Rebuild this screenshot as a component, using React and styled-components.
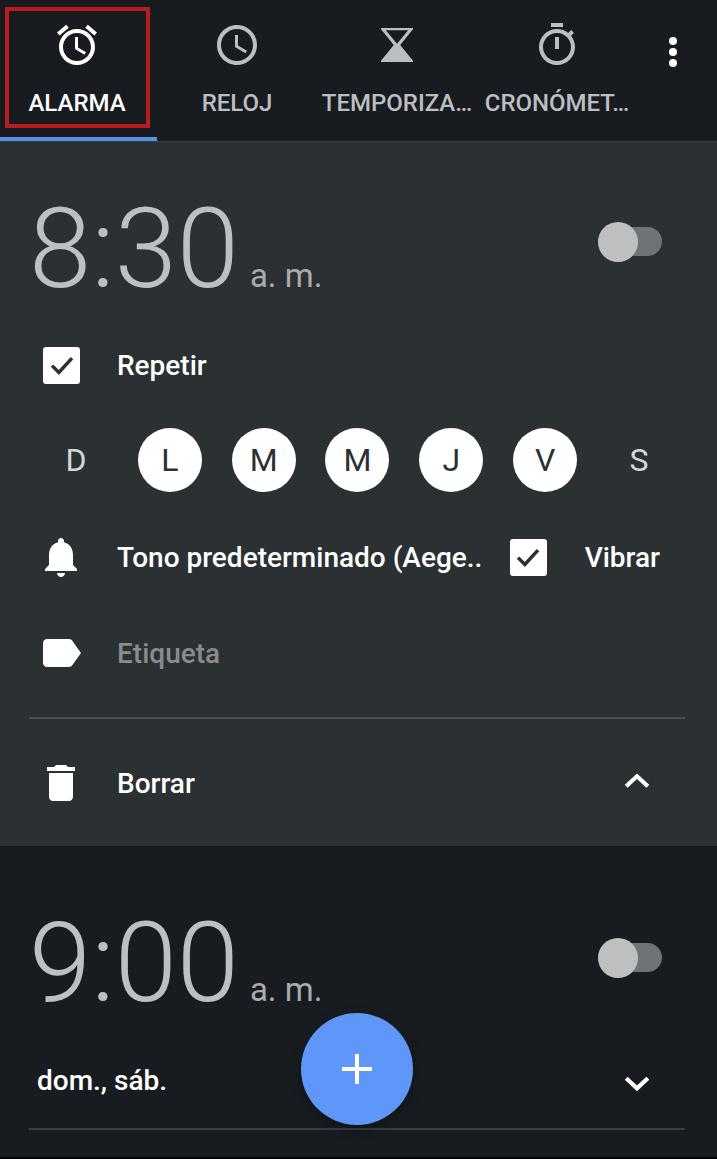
import styled, { createGlobalStyle } from "styled-components";

const GlobalStyle = createGlobalStyle`
	html, body {
		margin: 0;
		padding: 0;
		background: #000;
	}
	* {
		box-sizing: border-box;
	}
`;

const Screen = styled.div`
	position: relative;
	width: 717px;
	height: 1159px;
	overflow: hidden;
	font-family: Roboto, "Liberation Sans", sans-serif;
	background: #000;
`;

const TabBar = styled.nav`
	height: 141px;
	display: flex;
	margin-left: -3px;
	background: #181c20;
`;

const Tab = styled.div`
	position: relative;
	flex: 0 0 160px;
	display: flex;
	flex-direction: column;
	align-items: center;
	padding-top: 21px;
	color: ${(p) => (p.$active ? "#fff" : "#bcbfc1")};
	&::after {
		content: "";
		display: ${(p) => (p.$active ? "block" : "none")};
		position: absolute;
		left: 0;
		right: 0;
		bottom: 0;
		height: 4px;
		background: #5a8fe6;
	}
`;

const TabIcon = styled.svg`
	width: 48px;
	height: 48px;
	fill: currentColor;
	fill-rule: evenodd;
`;

const TabLabel = styled.span`
	margin-top: 20px;
	font-size: 24px;
	line-height: 28px;
	font-weight: 500;
	white-space: nowrap;
`;

const Overflow = styled.div`
	flex: 1;
	display: flex;
	flex-direction: column;
	align-items: center;
	gap: 3px;
	padding: 37px 8px 0 0;
	> i {
		width: 8px;
		height: 8px;
		border-radius: 50%;
		background: #fff;
	}
`;

const Highlight = styled.div`
	position: absolute;
	left: 5px;
	top: 7px;
	width: 145px;
	height: 121px;
	border: 4px solid #b71c1f;
`;

const OpenAlarm = styled.section`
	height: 705px;
	background: #2b3033;
	border-top: 1px solid #3a3f42;
	padding: 0 32px 0 29px;
`;

const ClosedAlarm = styled.section`
	height: 311px;
	background: #181c20;
	padding: 0 32px 0 29px;
`;

const TimeRow = styled.div`
	height: ${(p) => p.$height}px;
	display: flex;
	align-items: flex-start;
	justify-content: space-between;
	padding-top: ${(p) => p.$top}px;
`;

const Time = styled.div`
	display: flex;
	align-items: baseline;
	color: #bdc0c2;
`;

const Digits = styled.span`
	font-size: 112px;
	line-height: 132px;
	font-weight: 300;
`;

const Meridiem = styled.span`
	margin-left: 11px;
	font-size: 33px;
	font-weight: 400;
	color: #a9acae;
`;

const Toggle = styled.div`
	position: relative;
	width: 64px;
	height: 29px;
	margin: ${(p) => p.$top}px 23px 0 0;
	border-radius: 15px;
	background: #6e7375;
	&::before {
		content: "";
		position: absolute;
		left: 0;
		top: -5px;
		width: 40px;
		height: 40px;
		border-radius: 50%;
		background: #bfbfbf;
	}
`;

const Row = styled.div`
	height: ${(p) => p.$height || 96}px;
	display: flex;
	align-items: center;
	padding-bottom: 2px;
	color: #fff;
	font-size: 28px;
	font-weight: 500;
`;

const IconSlot = styled.div`
	flex: 0 0 88px;
	display: flex;
	align-items: center;
	padding-left: ${(p) => p.$inset || 8}px;
`;

const Glyph = styled.svg`
	width: 48px;
	height: 48px;
	fill: #fff;
`;

const CheckBox = styled.div`
	width: 37px;
	height: 37px;
	border-radius: 3px;
	background: #fff;
	display: flex;
	align-items: center;
	justify-content: center;
	flex: none;
`;

const CheckMark = styled.svg`
	width: 30px;
	height: 30px;
	fill: none;
	stroke: #2b3033;
	stroke-width: 2.8;
`;

const Days = styled.div`
	display: flex;
	justify-content: space-between;
	height: 96px;
	align-items: center;
	margin: -2px 14px 2px 0;
	padding-left: 15px;
`;

const Day = styled.div`
	width: 64px;
	height: 64px;
	border-radius: 50%;
	display: flex;
	align-items: center;
	justify-content: center;
	font-size: 32px;
	background: ${(p) => (p.$on ? "#fff" : "transparent")};
	color: ${(p) => (p.$on ? "#2b3033" : "#d4d6d7")};
`;

const Ringtone = styled.span`
	flex: 1;
	white-space: nowrap;
`;

const Muted = styled.span`
	color: #888c8e;
`;

const Vibrate = styled.div`
	display: flex;
	align-items: center;
	gap: 38px;
	margin-right: 25px;
`;

const Divider = styled.hr`
	margin: ${(p) => p.$gap || 0}px 0 0;
	border: none;
	height: 2px;
	background: ${(p) => p.$color};
`;

const Spread = styled.div`
	flex: 1;
`;

const Chevron = styled.svg`
	width: 40px;
	height: 40px;
	margin-right: 28px;
	fill: none;
	stroke: #fff;
	stroke-width: 2.5;
`;

const Repeats = styled.span`
	padding-left: 8px;
`;

const Fab = styled.button`
	position: absolute;
	left: 301px;
	top: 1013px;
	width: 112px;
	height: 112px;
	border: none;
	border-radius: 50%;
	background: #5f97f8;
	box-shadow: 0 4px 12px rgba(0, 0, 0, 0.35);
	display: flex;
	align-items: center;
	justify-content: center;
`;

const Plus = styled.svg`
	width: 30px;
	height: 30px;
	fill: #fff;
`;

const tabs = [
	{
		label: "ALARMA",
		active: true,
		icon: "M22 5.72l-4.6-3.86-1.29 1.53 4.6 3.86L22 5.72zM7.88 3.39L6.6 1.86 2 5.71l1.29 1.53 4.59-3.85zM12.5 8H11v6l4.75 2.85.75-1.23-4-2.37V8zM12 4c-4.97 0-9 4.03-9 9s4.03 9 9 9 9-4.03 9-9-4.03-9-9-9zm0 16c-3.87 0-7-3.13-7-7s3.13-7 7-7 7 3.13 7 7-3.13 7-7 7z",
	},
	{
		label: "RELOJ",
		icon: "M11.99 2C6.47 2 2 6.48 2 12s4.47 10 9.99 10C17.52 22 22 17.52 22 12S17.52 2 11.99 2zM12 20c-4.42 0-8-3.58-8-8s3.58-8 8-8 8 3.58 8 8-3.58 8-8 8zm.5-13H11v6l5.25 3.15.75-1.23-4.5-2.67V7z",
	},
	{
		// hourglass: hollow top bulb, filled bottom bulb
		label: "TEMPORIZA…",
		icon: "M4 3.5h16v.6L13.6 12 20 19.9v.6H4v-.6L10.4 12 4 4.1v-.6zM6.4 4.6L12 11.4l5.6-6.8H6.4z",
	},
	{
		label: "CRONÓMET…",
		icon: "M15 1H9v2h6V1zm-4 13h2V8h-2v6zm8.03-6.61l1.42-1.42c-.43-.51-.9-.99-1.41-1.41l-1.42 1.42C16.07 4.74 14.12 4 12 4c-4.97 0-9 4.03-9 9s4.02 9 9 9 9-4.03 9-9c0-2.12-.74-4.07-1.97-5.61zM12 20c-3.87 0-7-3.13-7-7s3.13-7 7-7 7 3.13 7 7-3.13 7-7 7z",
	},
];

const days = [
	{ label: "D" },
	{ label: "L", on: true },
	{ label: "M", on: true },
	{ label: "M", on: true },
	{ label: "J", on: true },
	{ label: "V", on: true },
	{ label: "S" },
];

function Check() {
	return (
		<CheckBox>
			<CheckMark viewBox="0 0 24 24">
				<path d="M4 12.5l5.5 5.5L20 6.5" />
			</CheckMark>
		</CheckBox>
	);
}

export default function App() {
	return (
		<Screen>
			<GlobalStyle />
			<TabBar>
				{tabs.map((t) => (
					<Tab key={t.label} $active={t.active}>
						<TabIcon viewBox="0 0 24 24">
							<path d={t.icon} />
						</TabIcon>
						<TabLabel>{t.label}</TabLabel>
					</Tab>
				))}
				<Overflow>
					<i />
					<i />
					<i />
				</Overflow>
			</TabBar>
			<Highlight />

			<OpenAlarm>
				<TimeRow $height={176} $top={41}>
					<Time>
						<Digits>8:30</Digits>
						<Meridiem>a. m.</Meridiem>
					</Time>
					<Toggle $top={44} />
				</TimeRow>
				<Row>
					<IconSlot $inset={14}>
						<Check />
					</IconSlot>
					Repetir
				</Row>
				<Days>
					{days.map((d, i) => (
						<Day key={i} $on={d.on}>
							{d.label}
						</Day>
					))}
				</Days>
				<Row>
					<IconSlot>
						<Glyph viewBox="0 0 24 24">
							<path d="M12 22c1.1 0 2-.9 2-2h-4c0 1.1.9 2 2 2zm6-6v-5c0-3.07-1.63-5.64-4.5-6.32V4c0-.83-.67-1.5-1.5-1.5s-1.5.67-1.5 1.5v.68C7.64 5.36 6 7.92 6 11v5l-2 2v1h16v-1l-2-2z" />
						</Glyph>
					</IconSlot>
					<Ringtone>Tono predeterminado (Aege..</Ringtone>
					<Vibrate>
						<Check />
						Vibrar
					</Vibrate>
				</Row>
				<Row>
					<IconSlot>
						<Glyph viewBox="0 0 24 24">
							<path d="M17.63 5.84C17.27 5.33 16.67 5 16 5L5 5.01C3.9 5.01 3 5.9 3 7v10c0 1.1.9 1.99 2 1.99L16 19c.67 0 1.27-.33 1.63-.84L22 12l-4.37-6.16z" />
						</Glyph>
					</IconSlot>
					<Muted>Etiqueta</Muted>
				</Row>
				<Divider $gap={15} $color="#4a4e51" />
				<Row $height={130}>
					<IconSlot>
						<Glyph viewBox="0 0 24 24">
							<path d="M6 19c0 1.1.9 2 2 2h8c1.1 0 2-.9 2-2V7H6v12zM19 4h-3.5l-1-1h-5l-1 1H5v2h14V4z" />
						</Glyph>
					</IconSlot>
					<Spread>Borrar</Spread>
					<Chevron viewBox="0 0 24 24">
						<path d="M5.5 14l6.5-6 6.5 6" />
					</Chevron>
				</Row>
			</OpenAlarm>

			<ClosedAlarm>
				<TimeRow $height={188} $top={51}>
					<Time>
						<Digits>9:00</Digits>
						<Meridiem>a. m.</Meridiem>
					</Time>
					<Toggle $top={46} />
				</TimeRow>
				<Row $height={94}>
					<Repeats>dom., sáb.</Repeats>
					<Spread />
					<Chevron viewBox="0 0 24 24">
						<path d="M5.5 11l6.5 6 6.5-6" />
					</Chevron>
				</Row>
				<Divider $color="#3b3f42" />
			</ClosedAlarm>

			<Fab>
				<Plus viewBox="0 0 30 30">
					<path d="M13 0h4v13h13v4H17v13h-4V17H0v-4h13z" />
				</Plus>
			</Fab>
		</Screen>
	);
}
